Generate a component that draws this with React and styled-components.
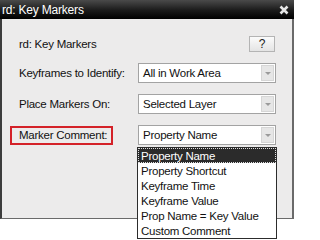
import React from "react";
import styled, { createGlobalStyle } from "styled-components";

const Global = createGlobalStyle`
  html, body { margin: 0; padding: 0; background: #ffffff; }
  body { font-family: "Liberation Sans", Arial, sans-serif; }
`;

const Stage = styled.div`
  position: relative;
  width: 296px;
  height: 240px;
  overflow: hidden;
  white-space: nowrap;
`;

const Window = styled.div`
  width: 294px;
  height: 219px;
  box-sizing: border-box;
  background: #ecebeb;
  border-left: 2px solid #3c3c3c;
  border-right: 2px solid #6a6a6a;
  border-bottom: 1px solid #6a6a6a;
  display: flex;
  flex-direction: column;
`;

const TitleBar = styled.div`
  height: 19px;
  margin: 0 -2px;
  background: linear-gradient(#4a4a4a, #1a1a1a 55%, #000);
  display: flex;
  align-items: center;
  justify-content: space-between;
  padding: 0 5px 0 2px;
  color: #ffffff;
  font-size: 12px;
  letter-spacing: -0.2px;
`;

const Close = styled.svg`
  width: 10px;
  height: 10px;
`;

const Body = styled.div`
  flex: 1;
  padding: 17px 16px 0 10px;
  display: flex;
  flex-direction: column;
  gap: 11px;
  font-size: 11.5px;
  letter-spacing: -0.25px;
  color: #111;
`;

const Row = styled.div`
  display: flex;
  align-items: center;
  justify-content: space-between;
  height: ${(p) => p.$h || 20}px;
`;

const HelpButton = styled.button`
  width: 26px;
  height: 16px;
  margin-right: 1px;
  padding: 0;
  border: 1px solid #b4b4b4;
  background: linear-gradient(#fbfbfb, #e4e4e4);
  font-family: inherit;
  font-size: 12px;
  color: #222;
  line-height: 14px;
`;

const Label = styled.span`
  display: flex;
  align-items: center;
  box-sizing: border-box;
  height: 19px;
  margin-left: ${(p) => (p.$marked ? "-2px" : "2px")};
  padding: ${(p) => (p.$marked ? "0 4px 0 7px" : "0 5px")};
  border: ${(p) => (p.$marked ? "2px solid #d42128" : "none")};
`;

const Select = styled.div`
  width: 138px;
  height: 20px;
  box-sizing: border-box;
  border: 1px solid #a3a3a3;
  background: #ffffff;
  display: flex;
  align-items: stretch;
`;

const SelectText = styled.span`
  flex: 1;
  padding-left: 4px;
  display: flex;
  align-items: center;
`;

const Arrow = styled.span`
  width: 11px;
  margin: 1px;
  background: #e6e6e6;
  border: 1px solid #d6d6d6;
  display: flex;
  align-items: center;
  justify-content: center;
  &::after {
    content: "";
    border-left: 3px solid transparent;
    border-right: 3px solid transparent;
    border-top: 3px solid #9a9a9a;
  }
`;

const List = styled.ul`
  position: absolute;
  left: 137px;
  top: 147px;
  width: 140px;
  margin: 0;
  padding: 0;
  box-sizing: border-box;
  list-style: none;
  background: #ffffff;
  border: 1px solid #2c2c2c;
  font-size: 11.5px;
  letter-spacing: -0.25px;
  color: #111;
`;

const Item = styled.li`
  height: 15px;
  line-height: 14px;
  box-sizing: border-box;
  padding-left: 2px;
  background: ${(p) => (p.$active ? "#2b2b2b" : "transparent")};
  color: ${(p) => (p.$active ? "#ffffff" : "#111")};
  border: 1px dotted ${(p) => (p.$active ? "#e0e0e0" : "transparent")};
`;

const options = [
  "Property Name",
  "Property Shortcut",
  "Keyframe Time",
  "Keyframe Value",
  "Prop Name = Key Value",
  "Custom Comment",
];

export default function App() {
  return (
    <Stage>
      <Global />
      <Window>
        <TitleBar>
          <span>rd: Key Markers</span>
          <Close viewBox="0 0 10 10">
            <path d="M1.5 1.5 L8.5 8.5 M8.5 1.5 L1.5 8.5" stroke="#e6e6e6" strokeWidth="2.6" />
          </Close>
        </TitleBar>
        <Body>
          <Row $h={16}>
            <Label>rd: Key Markers</Label>
            <HelpButton>?</HelpButton>
          </Row>
          <Row>
            <Label>Keyframes to Identify:</Label>
            <Select>
              <SelectText>All in Work Area</SelectText>
              <Arrow />
            </Select>
          </Row>
          <Row>
            <Label>Place Markers On:</Label>
            <Select>
              <SelectText>Selected Layer</SelectText>
              <Arrow />
            </Select>
          </Row>
          <Row>
            <Label $marked>Marker Comment:</Label>
            <Select>
              <SelectText>Property Name</SelectText>
              <Arrow />
            </Select>
          </Row>
        </Body>
      </Window>
      <List>
        {options.map((o, i) => (
          <Item key={o} $active={i === 0}>
            {o}
          </Item>
        ))}
      </List>
    </Stage>
  );
}
